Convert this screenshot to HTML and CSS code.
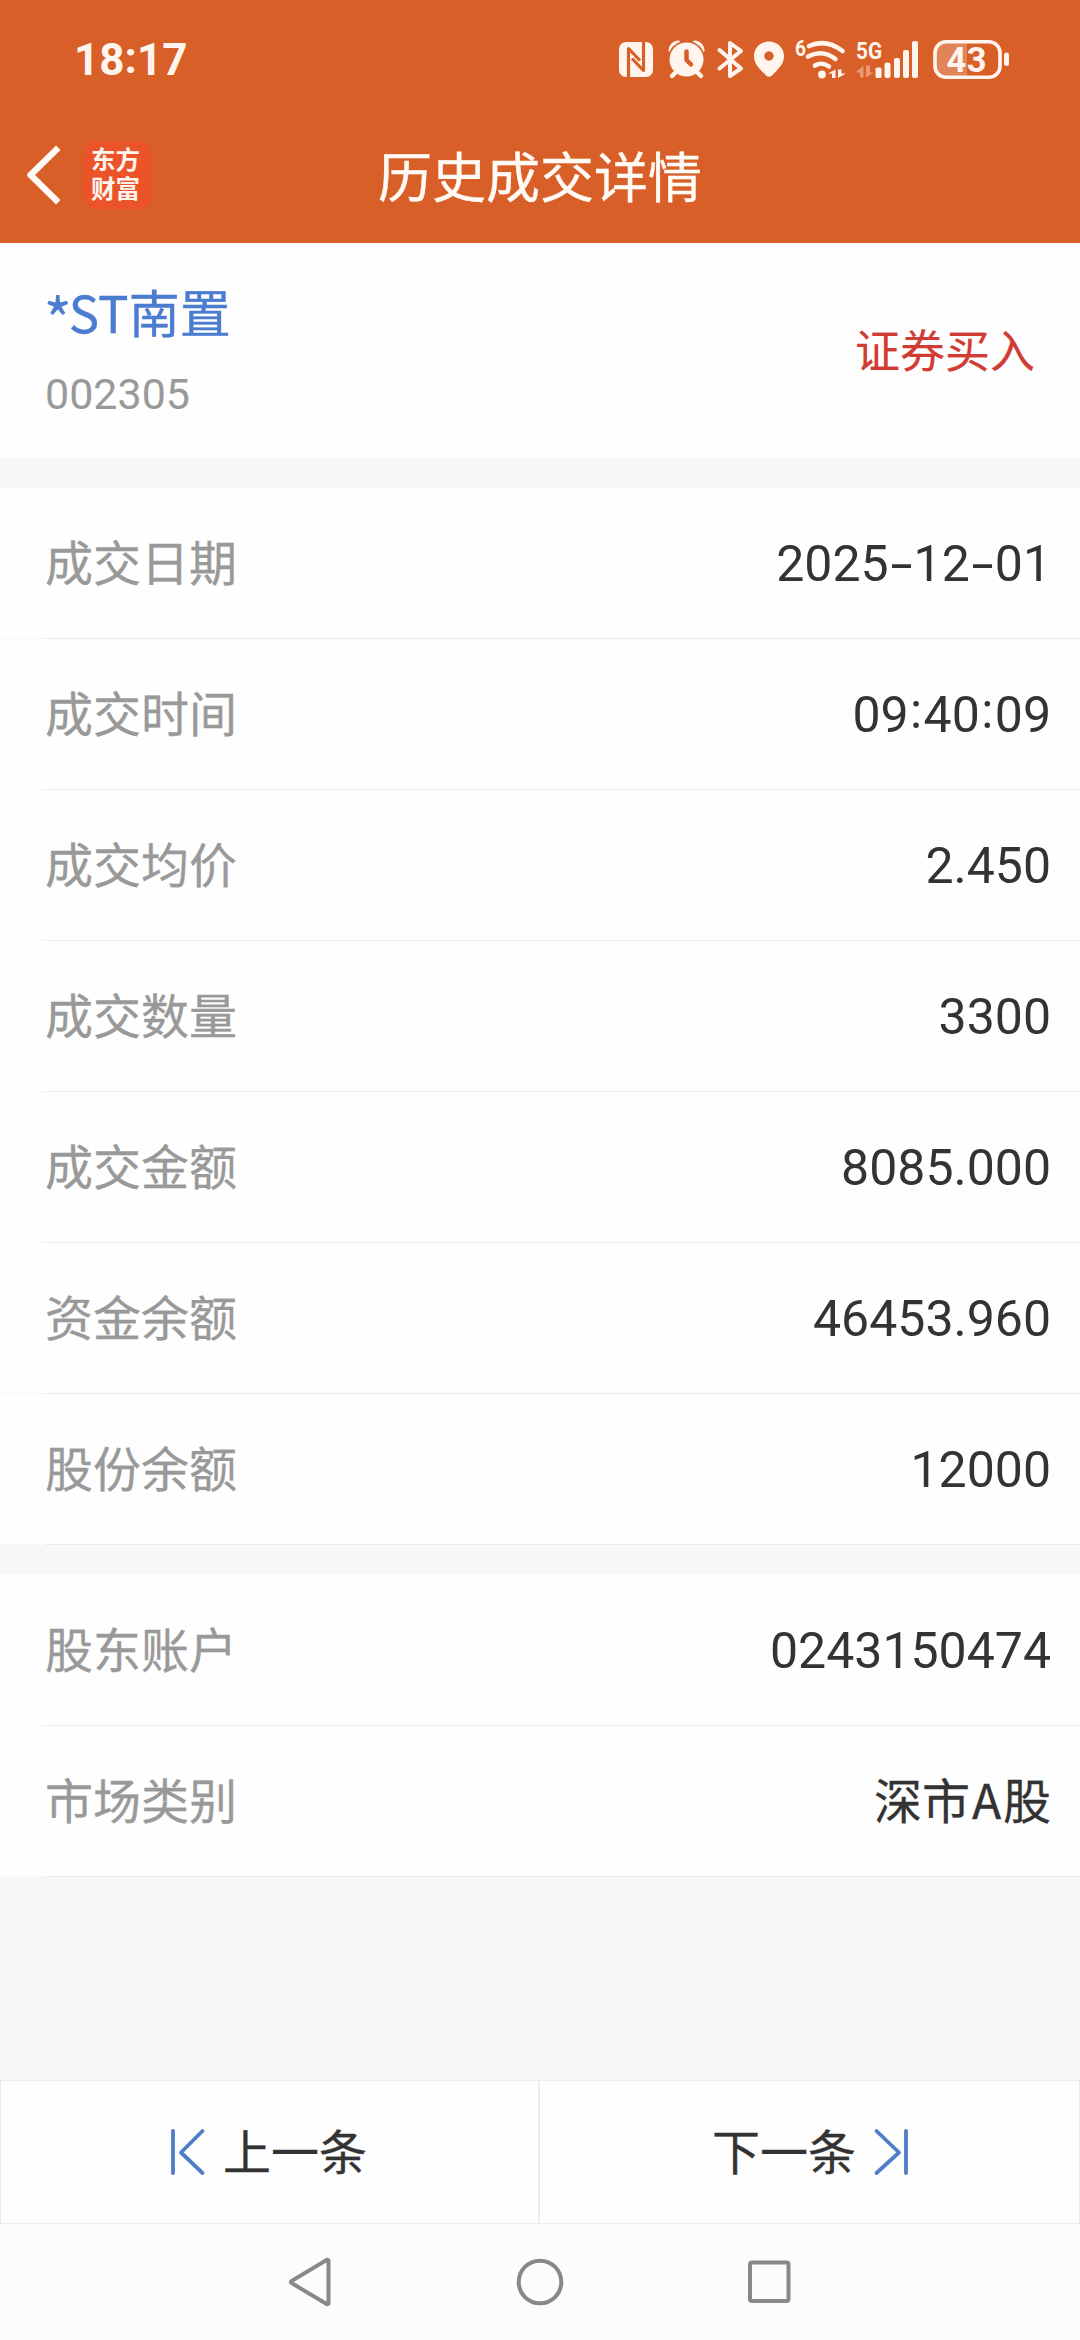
FILE: index.html
```html
<!DOCTYPE html>
<html lang="zh-CN">
<head>
<meta charset="utf-8">
<title>历史成交详情</title>
<link rel="stylesheet" href="styles.css">
</head>
<body>
<div class="screen">
  <header class="top">
    <div class="status">
      <span class="clock">18<span class="clock-colon">:</span>17</span>
      <div class="status-icons">
        <svg width="34" height="40" viewBox="619 40 34 40"><rect x="619" y="42" width="34" height="35" rx="7" fill="#fff5ee"/><path d="M628.500 79V48.500L640 60.500" class="cut"/><path d="M643.500 40V70.500L632 58.500" class="cut"/></svg>
        <svg class="alarm" width="38" height="40" viewBox="668 40 38 40"><g stroke="#fff5ee" fill="none" stroke-linecap="round"><path d="M671 50Q672 44 678 43M702 50Q701 44 695 43" stroke-width="5"/></g><circle cx="686.500" cy="59.500" r="18.700" fill="#d85f27"/><path d="M678 70L672 76M695 70L701 76" stroke="#fff5ee" stroke-width="4.500" stroke-linecap="round"/><circle cx="686.500" cy="59.500" r="17" fill="#fff5ee"/><path d="M686.500 51.500V60L691 64.500" stroke="#d85f27" stroke-width="4.500" stroke-linecap="round" stroke-linejoin="round" fill="none"/></svg>
        <svg class="bluetooth" width="26" height="40" viewBox="718 40 26 40"><path d="M719.500 50L741 68.500L730 76V43L741 51L719.500 68.500" fill="none" stroke="#fff5ee" stroke-width="4" stroke-linejoin="round" stroke-linecap="round"/></svg>
        <svg class="pin" width="30" height="40" viewBox="754 40 30 40"><path fill-rule="evenodd" d="M769 41.500C760.500 41.500 754 48 754 56C754 64.500 760 69 766 75.500Q769 78 772 75.500C778 69 784 64.500 784 56C784 48 777.500 41.500 769 41.500ZM769 51.300A4.700 4.700 0 1 1 768.990 51.300Z" fill="#fff5ee"/></svg>
        <svg class="wifi" width="52" height="40" viewBox="795 40 52 40"><text x="795" y="55.500" class="mini" font-size="22" textLength="11" lengthAdjust="spacingAndGlyphs">6</text><g fill="none" stroke="#fff5ee" stroke-width="4.600" stroke-linecap="round"><path d="M809 46Q826 38.500 842.500 51"/><path d="M808 56.500Q822 49 835.500 59"/><path d="M815 65.500Q822 61.500 829 66.500"/></g><circle cx="822" cy="74.500" r="3.900" fill="#fff5ee"/><path d="M828 73.500L835.500 69.500V78H832V73.500ZM838 69.500V78L846 73.500H841.500V69.500Z" fill="#fff5ee"/></svg>
        <svg class="signal" width="64" height="40" viewBox="855 40 64 40"><text x="856" y="59" class="mini" font-size="24" textLength="26" lengthAdjust="spacingAndGlyphs">5G</text><path d="M855.500 72.500L863.500 65.500V77.500H860V72.500ZM866 65.500V77.500L874 72.500H870V65.500Z" fill="#e99a72"/><g fill="#fff5ee"><rect x="875.500" y="67.500" width="6" height="10.500" rx="1.500"/><rect x="884.500" y="62.500" width="6" height="15.500" rx="2"/><rect x="894" y="58" width="6" height="20" rx="2"/><rect x="903" y="50" width="6" height="28" rx="2"/><rect x="912" y="41" width="6" height="37" rx="2"/></g></svg>
        <svg class="battery" width="76" height="40" viewBox="933 40 76 40"><path d="M967 42H946Q936 42 936 52V68Q936 77 946 77H967Z" fill="#e08557"/><rect x="935" y="41.800" width="65" height="35.500" rx="11" fill="none" stroke="#fff5ee" stroke-width="3.600"/><rect x="1004" y="52.500" width="5" height="13.500" rx="2.500" fill="#fff5ee"/><text x="946.500" y="71.500" class="mini" font-size="34.500" textLength="40" lengthAdjust="spacing">43</text></svg>
      </div>
    </div>
    <div class="titlebar">
      <div class="left">
        <svg class="back" width="34" height="58" viewBox="0 0 34 58"><path d="M30 4L4.500 29L30 54" fill="none" stroke="#fffaf5" stroke-width="6.400" stroke-linecap="square" stroke-linejoin="round"/></svg>
        <div class="logo"><span>东方</span><span>财富</span></div>
      </div>
      <h1>历史成交详情</h1>
    </div>
  </header>

  <section class="stock">
    <div>
      <div class="name"><span class="star">*</span>ST南置</div>
      <div class="code">002305</div>
    </div>
    <div class="side">证券买入</div>
  </section>

  <section class="rows">
    <div class="row"><span>成交日期</span><b>2025<i class="dash">-</i>12<i class="dash">-</i>01</b></div>
    <div class="row"><span>成交时间</span><b>09<i class="colon">:</i>40<i class="colon">:</i>09</b></div>
    <div class="row"><span>成交均价</span><b>2.450</b></div>
    <div class="row"><span>成交数量</span><b>3300</b></div>
    <div class="row"><span>成交金额</span><b>8085.000</b></div>
    <div class="row"><span>资金余额</span><b>46453.960</b></div>
    <div class="row"><span>股份余额</span><b>12000</b></div>
  </section>

  <section class="rows">
    <div class="row"><span>股东账户</span><b>0243150474</b></div>
    <div class="row"><span>市场类别</span><b class="cjk">深市<i class="wide">A</i>股</b></div>
  </section>

  <div class="pager">
    <div class="page prev"><svg width="34" height="48" viewBox="0 0 34 48"><path d="M2 3V45M31.500 3L10 24.500L31.500 45" class="arrow"/></svg><span>上一条</span></div>
    <div class="page next"><span>下一条</span><svg width="34" height="48" viewBox="0 0 34 48"><path d="M32 3V45M2.500 3L25 24.500L2.500 45" class="arrow"/></svg></div>
  </div>

  <nav class="nav">
    <svg width="48" height="48" viewBox="0 0 48 48"><path d="M41.500 2.500V45.500Q41 46.500 39.500 46L4.500 25Q3.500 24 4.500 23L39.500 2Q41 1.500 41.500 2.500Z" class="key"/></svg>
    <svg width="48" height="48" viewBox="0 0 48 48"><circle cx="24" cy="24" r="21.300" class="key"/></svg>
    <svg width="48" height="48" viewBox="0 0 48 48"><rect x="5" y="4.500" width="38.500" height="38.500" rx="2" class="key"/></svg>
  </nav>
</div>
</body>
</html>
```

FILE: styles.css
```css
* { box-sizing: border-box; }
body { margin: 0; background: #f6f7f9; font-family: "Noto Sans CJK SC", sans-serif; }
svg { display: block; flex: none; overflow: visible; }
.screen { width: 1080px; height: 2340px; display: flex; flex-direction: column; overflow: hidden; }

.top { height: 243px; background: #d85f27; color: #fffaf5; }
.status { height: 120px; padding: 0 71px 0 74px; display: flex; align-items: center; justify-content: space-between; }
.clock { font: 700 44px/60px Roboto, sans-serif; color: #fff5ee; }
.clock-colon { display: inline-block; transform: translateY(-2px); }
.status-icons { display: flex; }
.status-icons svg:first-child { overflow: hidden; }
.alarm { margin-left: 15px; }
.bluetooth { margin-left: 12px; }
.pin { margin-left: 10px; }
.wifi { margin-left: 11px; }
.signal { margin-left: 8px; }
.battery { margin-left: 14px; }
.mini { font-family: Roboto, sans-serif; font-weight: 700; fill: #fff5ee; }
.cut { fill: none; stroke: #d85f27; stroke-width: 3.2px; stroke-linejoin: round; }

.titlebar { height: 110px; display: grid; grid-template-columns: 1fr auto 1fr; align-items: center; }
.left { display: flex; align-items: center; padding-left: 26px; }
.logo { display: flex; flex-direction: column; width: 69px; height: 68px; margin-left: 23px; padding: 3px 0 0 8px; border-radius: 14px; background: #eb5329; color: #fff5ee; font-size: 24.5px; font-weight: 700; line-height: 29px; }
h1 { margin: 0; padding-bottom: 1px; font-size: 54px; font-weight: 400; line-height: 80px; -webkit-text-stroke: 0.4px; }

.stock { height: 215px; padding: 0 45px; background: #fefefe; display: flex; justify-content: space-between; align-items: center; }
.name { margin-top: -4px; font-size: 51px; line-height: 74px; color: #4b7ccf; -webkit-text-stroke: 0.4px; }
.star { display: inline-block; transform: translate(1px, 5px) scale(1.2); transform-origin: 50% 27px; -webkit-text-stroke: 0; }
.code { font: 400 43px/60px Roboto, sans-serif; margin-top: 16px; color: #999; }
.side { padding-bottom: 3px; font-size: 45px; line-height: 66px; color: #d03c34; -webkit-text-stroke: 0.2px; }

.rows { margin-top: 30px; background: #fefefe; }
.row { height: 151px; padding: 0 29px 0 45px; display: flex; justify-content: space-between; align-items: center; background: linear-gradient(#ebecee, #ebecee) 45px 150px / 1035px 1px no-repeat, linear-gradient(#f7f8fa, #f7f8fa) 0 150px / 45px 1px no-repeat; }
.row span { padding-bottom: 7px; font-size: 48px; line-height: 70px; color: #999; -webkit-text-stroke: 0.3px; }
.row b { font: 400 50px/70px Roboto, sans-serif; color: #333; }
.row .cjk { padding-bottom: 7px; font: 400 48px/70px "Noto Sans CJK SC", sans-serif; -webkit-text-stroke: 0.3px; }
.row i { display: inline-block; font-style: normal; text-align: center; }
.dash { width: 25px; transform: scaleX(1.6); }
.colon { width: 15px; transform: translateY(-4px); }
.wide { width: 33px; }

.pager { margin-top: auto; height: 144px; display: flex; }
.page { flex: 1; display: flex; align-items: center; border: 1px solid #ebecee; background: #fefefe; font-size: 48px; line-height: 70px; color: #333; -webkit-text-stroke: 0.3px; }
.page span { padding-bottom: 6px; }
.prev { padding-left: 170px; gap: 18px; }
.next { padding-left: 172px; gap: 18px; }
.arrow { fill: none; stroke: #4f7dc8; stroke-width: 3.8px; stroke-linecap: round; stroke-linejoin: round; }

.nav { height: 116px; background: #fcfcfc; display: flex; justify-content: center; align-items: center; gap: 181px; }
.key { fill: none; stroke: #888; stroke-width: 4px; }
```
